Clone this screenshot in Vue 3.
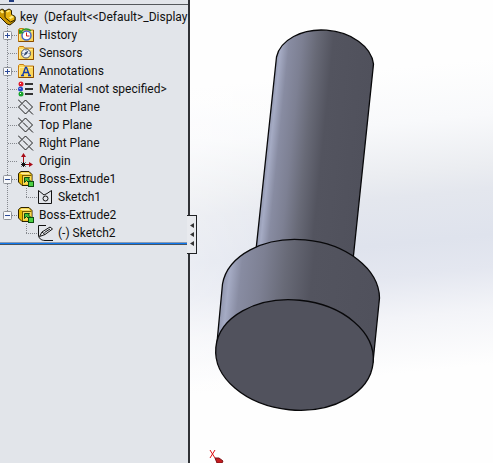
<script setup>
const items = [
  { label: 'History', icon: 'history', toggle: '+' },
  { label: 'Sensors', icon: 'sensors' },
  { label: 'Annotations', icon: 'annotations', toggle: '+' },
  { label: 'Material <not specified>', icon: 'material' },
  { label: 'Front Plane', icon: 'plane' },
  { label: 'Top Plane', icon: 'plane' },
  { label: 'Right Plane', icon: 'plane' },
  { label: 'Origin', icon: 'origin' },
  { label: 'Boss-Extrude1', icon: 'extrude', toggle: '-' },
  { label: 'Sketch1', icon: 'sketch', child: true },
  { label: 'Boss-Extrude2', icon: 'extrude', toggle: '-' },
  { label: '(-) Sketch2', icon: 'pencil', child: true },
]
</script>

<template>
  <div class="app">
    <aside class="panel">
      <div class="strip"><span class="grip"></span></div>
      <div class="root">
        <svg class="part" width="16" height="18" viewBox="0 0 16 18">
          <path d="M-1 3 L2 1 4 2 6 5 6 8 10 10 15 9 15 13 10 17 7 16 -1 8Z" fill="#c99500" stroke="#2b2000" />
          <path d="M5 3 L9 1 11.500 2.500 11.500 6.500 15 8.500 15 12 10.500 14 5 9.500Z" fill="#eab512" stroke="#2b2000" />
          <path d="M6 3.500 L9 2 10.500 3 7.500 4.500Z M9 9.500 L12 7.500 14 9 10.500 11Z M0 3.500 L2 2 4 4.500 2 5.500Z" fill="#ffec80" />
        </svg>
        <span class="name">key&nbsp; (Default&lt;&lt;Default&gt;_Display</span>
      </div>
      <ul class="tree">
        <li v-for="item in items" :key="item.label" class="row" :class="{ child: item.child }">
          <span class="gutter">
            <button v-if="item.toggle" class="toggle" type="button" :aria-label="item.label" :aria-expanded="item.toggle === '-'">
              <svg width="9" height="9" viewBox="0 0 9 9">
                <rect x=".5" y=".5" width="8" height="8" rx="1" fill="#f7f8fa" stroke="#8e9299" />
                <path :d="item.toggle === '+' ? 'M2 4.5H7M4.5 2V7' : 'M2 4.5H7'" stroke="#2c4a98" />
              </svg>
            </button>
          </span>
          <svg class="icon" width="16" height="16" viewBox="0 0 16 16" fill="none">
            <template v-if="['history', 'sensors', 'annotations'].includes(item.icon)">
              <path d="M.5 2.500 L1.500 1.500 H5.500 L6.500 3 H15.500 V14.500 H.5Z" fill="#fbd75c" stroke="#c67c10" />
              <path d="M1.500 4.500H14.500M1.500 4.500V13.500" stroke="#ffed9c" />
              <path d="M.5 14.500H15.500V3" stroke="#8a4d00" />
            </template>
            <template v-if="item.icon === 'history'">
              <circle cx="8.500" cy="8.500" r="4.500" fill="#fff" stroke="#4468c8" stroke-width="1.500" />
              <path d="M8.500 5.500V9H11.500" stroke="#d01818" />
              <path d="M3 5 C5 1.500 10 1 13 4" stroke="#2e9a28" stroke-width="1.500" />
              <path d="M1 2V7L6 6Z" fill="#2e9a28" />
            </template>
            <template v-else-if="item.icon === 'sensors'">
              <circle cx="8" cy="8.500" r="4.500" fill="#eef3fa" stroke="#4c5360" />
              <path d="M5.500 11 L7 7.500 10.500 5.500 9 9Z" fill="#394d70" />
              <path d="M8 4.500V6M4 8.500H5.500M10.500 8.500H12" stroke="#8391ab" />
            </template>
            <template v-else-if="item.icon === 'annotations'">
              <path d="M4.500 12.500 L7.500 4.500H8.500L11.500 12.500M5.500 9.500H10.500M3 12.500H6M10 12.500H13" stroke="#123bac" stroke-width="1.300" />
            </template>
            <template v-else-if="item.icon === 'material'">
              <circle cx="3" cy="3" r="2.500" fill="#e21b2b" />
              <circle cx="2.500" cy="8" r="2.500" fill="#2746c8" />
              <circle cx="3" cy="13" r="2.500" fill="#18a52c" />
              <path d="M2 2.500H3M1.500 7.500H2.500M2 12.500H3" stroke="#fff" />
              <path d="M7 3H15M7 8H15M7 13H15" stroke="#333" stroke-width="2" />
            </template>
            <template v-else-if="item.icon === 'plane'">
              <path d="M7.500 1 L14.500 8 7.500 15 .5 8Z M0 .5 L4 4.500 M5 5.500 L10 10.500 M11 11.500 L15 15.500" stroke="#1b1b1b" />
            </template>
            <template v-else-if="item.icon === 'origin'">
              <path d="M5.500 10V2M7 11.500H12" stroke="#a80c18" />
              <path d="M3 4 L5.500 0 8 4Z M11 9 L15 11.500 11 14Z" fill="#a80c18" />
              <path d="M3.500 9.500 L7.500 13.500M7.500 9.500L3.500 13.500M5.500 9V14M3 11.500H8" stroke="#111" />
            </template>
            <template v-else-if="item.icon === 'extrude'">
              <path d="M.5 2.500 L3 .5H11L14 3.500V14L11 14.500H4L.5 11Z" fill="#e6b800" stroke="#2c2100" />
              <path d="M4.500 4.500H13.500V13.500H4.500Z" fill="#fad955" />
              <path d="M2 2.500 L3.500 1.500H10.500L12.500 3.500H4.500Z" fill="#fff0a0" />
              <path d="M4.500 4V14M4.500 4.500H13" stroke="#7b5c00" />
              <path d="M6.500 6.500H11.500L10.500 8 13 10.500 11 12 8.500 9.500 6.500 11.500Z" fill="#43c23a" stroke="#0d4c10" />
              <rect x="10.500" y="10.500" width="5" height="5" fill="#4cd043" stroke="#0d4c10" />
            </template>
            <template v-else-if="item.icon === 'sketch'">
              <path d="M1.500 1.500V14.500H14.500V1.500L10 4.500 7 6 1.500 1.500" stroke="#111" />
              <circle cx="8.500" cy="9.500" r="2.500" stroke="#111" />
            </template>
            <template v-else>
              <path d="M9 .5H1.500V10C1.500 13 4 15.500 8 15.500H16" stroke="#111" />
              <path d="M2.500 11.500 L5 7 13 2 15.500 4 8 9.500Z M5 7L8 9.500M7.500 7.500L13 4" fill="#edf0f4" stroke="#111" />
            </template>
          </svg>
          <span class="label">{{ item.label }}</span>
        </li>
      </ul>
      <div class="rollback"></div>
      <button class="handle" type="button" aria-label="Collapse panel">
        <svg width="4" height="23" viewBox="0 0 4 23"><path d="M4 0V5L0 2.500ZM4 9V14L0 11.500ZM4 18V23L0 20.500Z" fill="#333" /></svg>
      </button>
    </aside>
    <main class="viewport">
      <svg class="scene" viewBox="190 0 303 463" preserveAspectRatio="xMinYMin slice">
        <defs>
          <linearGradient id="sky" gradientUnits="userSpaceOnUse" x1="325" y1="0" x2="370" y2="460">
            <stop offset=".16" stop-color="#fefefe" />
            <stop offset=".28" stop-color="#f8f9fb" />
            <stop offset=".39" stop-color="#ebedf1" />
            <stop offset=".44" stop-color="#e4e7ee" />
            <stop offset=".54" stop-color="#dfe3ed" />
            <stop offset=".61" stop-color="#e4e7f0" />
            <stop offset=".7" stop-color="#f3f4f8" />
            <stop offset=".82" stop-color="#fefefe" />
          </linearGradient>
          <linearGradient id="haze" x1="0" x2="1">
            <stop offset="0" stop-color="#fff" stop-opacity=".35" />
            <stop offset=".5" stop-color="#fff" stop-opacity="0" />
          </linearGradient>
          <linearGradient id="shaft" gradientUnits="userSpaceOnUse" x1="267" y1="145" x2="364" y2="155">
            <stop offset="0" stop-color="#9298b0" />
            <stop offset=".04" stop-color="#a5abc4" />
            <stop offset=".12" stop-color="#888ca2" />
            <stop offset=".25" stop-color="#7d8093" />
            <stop offset=".4" stop-color="#686a77" />
            <stop offset=".57" stop-color="#53545f" />
            <stop offset="1" stop-color="#50515c" />
          </linearGradient>
          <linearGradient id="head" gradientUnits="userSpaceOnUse" x1="219" y1="300" x2="376" y2="317">
            <stop offset="0" stop-color="#8c91a8" />
            <stop offset=".05" stop-color="#a5abc4" />
            <stop offset=".12" stop-color="#888ca2" />
            <stop offset=".25" stop-color="#7d8093" />
            <stop offset=".4" stop-color="#686a77" />
            <stop offset=".57" stop-color="#53545f" />
            <stop offset="1" stop-color="#50515c" />
          </linearGradient>
        </defs>
        <rect x="190" width="303" height="463" fill="url(#sky)" />
        <rect x="190" width="303" height="463" fill="url(#haze)" />
        <g stroke="#08080a" stroke-width="1.300">
          <path d="M276.500 59 A49 34.500 5.500 0 1 373.500 66 L353 262 L256 252Z" fill="url(#shaft)" transform="translate(0 -2)" />
          <path d="M222.500 284 A79 55 5.500 0 1 379.500 298 L373 362 L216.500 348Z" fill="url(#head)" />
          <ellipse cx="294.500" cy="355" rx="79" ry="55" transform="rotate(5.500 294.500 355)" fill="#51525d" />
        </g>
        <path d="M210 450 L215 458M215 450L210 458" stroke="#e00c10" />
        <path d="M215 458 L219 458 223 461 222 463H217Z" fill="#c51c20" stroke="#7c1014" />
      </svg>
    </main>
  </div>
</template>

<style>
body { margin: 0; }
</style>

<style scoped>
.app {
  display: grid;
  grid-template-columns: 190px 1fr;
  min-height: 100vh;
  font: 12px/18px Roboto, "Open Sans", sans-serif;
  color: #101010;
}
.panel {
  position: relative;
  box-sizing: border-box;
  min-width: 0;
  background: #e2e5ea;
  border-right: 2px solid #303236;
}
.strip {
  box-sizing: border-box;
  height: 5px;
  padding-left: 9px;
  border-bottom: 1px solid #55585c;
}
.grip {
  display: block;
  width: 5px;
  height: 2px;
  background: #203c80;
}
.root {
  display: flex;
  align-items: center;
  gap: 4px;
  height: 18px;
  padding-top: 3px;
  white-space: nowrap;
}
.part { flex: none; }
.tree {
  margin: 0;
  padding: 0;
  list-style: none;
  background: repeating-linear-gradient(#85888e 0 1px, transparent 1px 2px) 7px 0 / 1px 188px no-repeat;
}
.row {
  display: flex;
  align-items: center;
  height: 18px;
  white-space: nowrap;
}
.gutter {
  display: flex;
  align-items: center;
  box-sizing: border-box;
  width: 18px;
  height: 18px;
  padding-left: 3px;
  background: repeating-linear-gradient(90deg, #85888e 0 1px, transparent 1px 2px) 8px 9px / 10px 1px no-repeat;
}
.child .gutter {
  width: 37px;
  background:
    repeating-linear-gradient(#85888e 0 1px, transparent 1px 2px) 26px 0 / 1px 10px no-repeat,
    repeating-linear-gradient(90deg, #85888e 0 1px, transparent 1px 2px) 26px 9px / 11px 1px no-repeat;
}
.toggle {
  display: block;
  padding: 0;
  border: 0;
  background: none;
}
.toggle svg, .handle svg { display: block; }
.icon { flex: none; }
.label { padding-left: 5px; }
.rollback {
  height: 3px;
  margin-right: 1px;
  background: linear-gradient(#8b9ab0 0 1px, #0c78f0 1px 2px, #48535f 2px 3px);
}
.handle {
  position: absolute;
  top: 215px;
  right: -9px;
  display: flex;
  align-items: center;
  justify-content: flex-end;
  box-sizing: border-box;
  width: 10px;
  height: 39px;
  padding: 0 2px 0 0;
  border: 1px solid #202225;
  border-left: 0;
  background: #e8eaee;
  z-index: 1;
}
.viewport {
  position: relative;
  min-width: 0;
  overflow: hidden;
}
.scene {
  position: absolute;
  inset: 0;
  width: 100%;
  height: 100%;
}
</style>
